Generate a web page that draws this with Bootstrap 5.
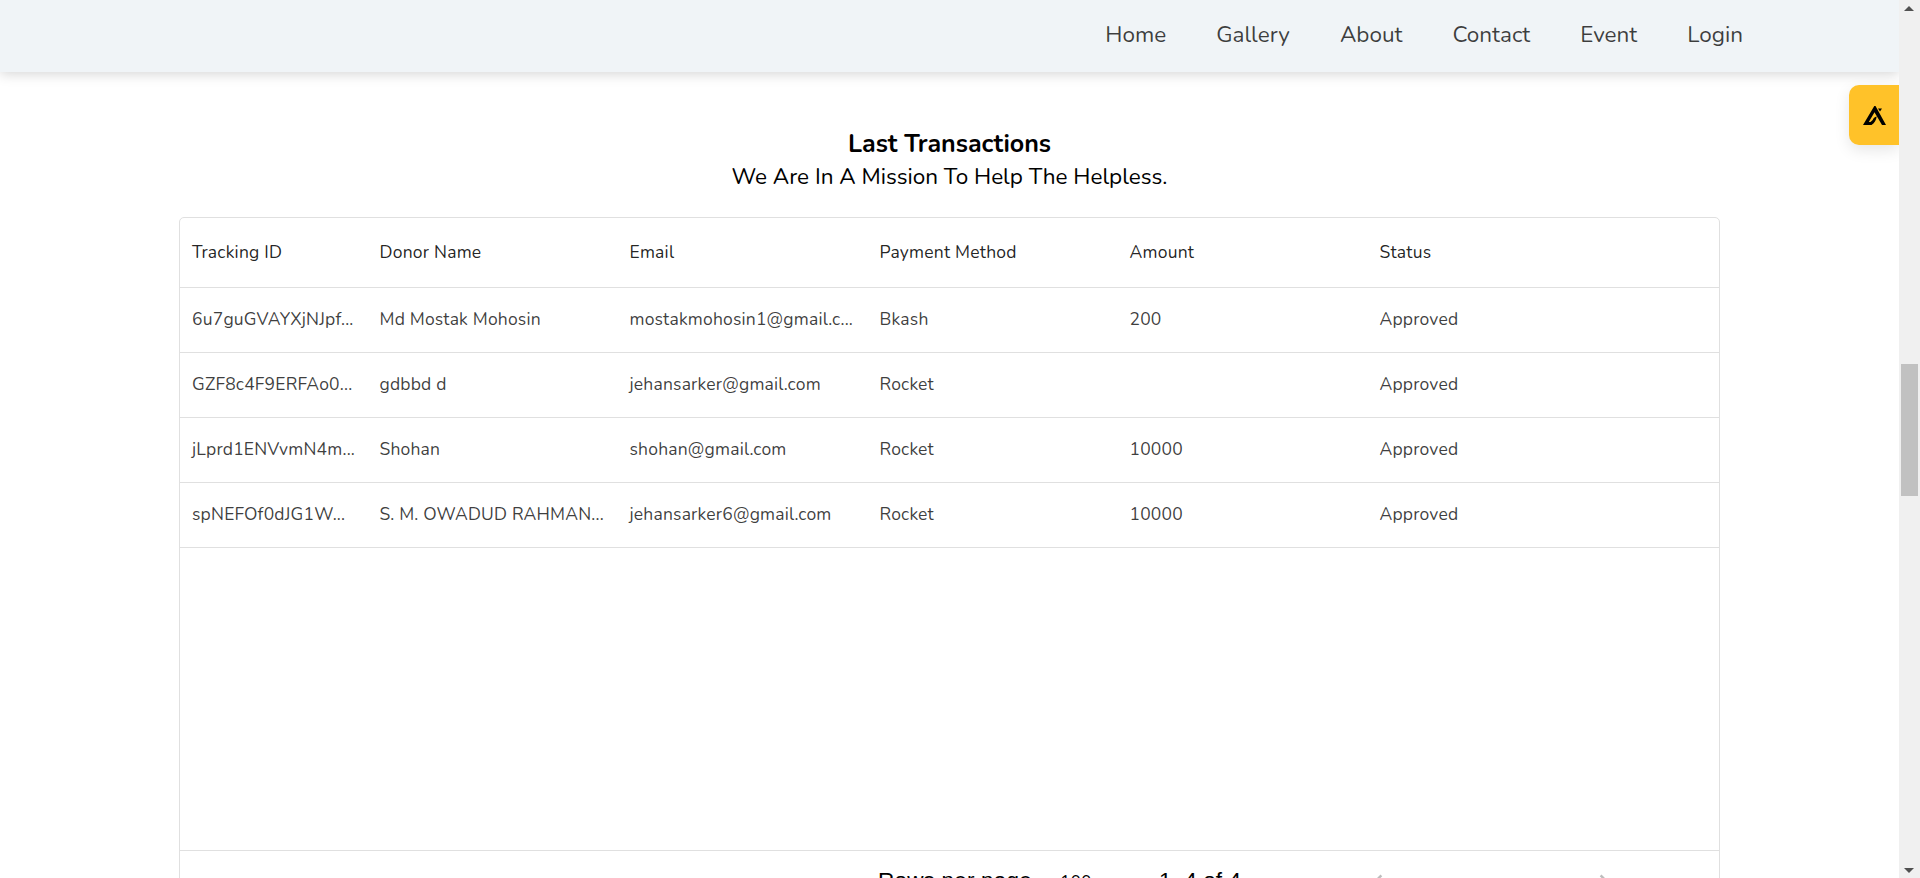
<!DOCTYPE html>
<html lang="en">
<head>
<meta charset="utf-8">
<meta name="viewport" content="width=device-width, initial-scale=1">
<title>Last Transactions</title>
<link href="https://cdn.jsdelivr.net/npm/bootstrap@5.3.0/dist/css/bootstrap.min.css" rel="stylesheet">
<style>
  body { font-family: Nunito, Lato, "Liberation Sans", sans-serif; color: #000; background: #fff; }
  .screen { height: 878px; }
  .page-view { width: 1899px; }
  .top-nav { height: 72px; background: #f0f4f7; box-shadow: 0 2px 12px rgba(0,0,0,.17); padding: 0 156px 2px 0; }
  .top-nav .nav-link { font-size: 22.5px; line-height: 34px; color: rgba(0,0,0,.75); padding: 0; margin-left: 50px; }
  .heading { font-size: 25px; font-weight: 700; line-height: 33px; margin: 56px 0 0; }
  .subheading { font-size: 22.5px; line-height: 32px; margin: 0 0 24px; }
  .data-grid { width: 1541px; height: 740px; border: 1px solid #e0e0e0; border-radius: 5px; font-size: 17.5px; letter-spacing: .1875px; }
  .grid-head, .grid-line { border-bottom: 1px solid #e0e0e0; }
  .grid-head { height: 70px; letter-spacing: .22px; color: rgba(0,0,0,.87); }
  .grid-line { height: 65px; color: rgba(0,0,0,.77); padding-bottom: 1px; }
  .cell { width: 250px; padding: 0 13px 0 12px; white-space: nowrap; overflow: hidden; flex: none; }
  .cell:first-child { width: 187.5px; }
  .grid-body { height: 563px; border-bottom: 1px solid #e0e0e0; }
  .grid-foot { height: 61px; line-height: 34px; padding: 0 100px 0 698px; }
  .foot-text { font-family: "Liberation Sans", sans-serif; font-size: 22.5px; letter-spacing: .2px; padding-bottom: 1px; }
  .foot-label { width: 154px; white-space: nowrap; }
  .pager { width: 30px; margin-left: 28px; letter-spacing: 0; }
  .range { margin-left: 69px; letter-spacing: .1px; }
  .pager-next { margin-left: 196px; }
  .side-tab { width: 50px; height: 60px; top: 85px; right: 0; background: #ffc229; border-radius: 10px 0 0 10px; box-shadow: 0 5px 15px rgba(0,0,0,.1); padding: 1px 0 0 14px; }
  .scroll-rail { width: 21px; background: #f0f0f0; padding: 6px 0 5px; }
  .scroll-thumb { width: 17px; height: 132px; background: #c1c1c1; margin-top: 353px; margin-left: 2px; }
</style>
</head>
<body>
<div class="screen d-flex overflow-hidden">
  <div class="page-view position-relative overflow-hidden flex-shrink-0">
    <nav class="top-nav d-flex align-items-center justify-content-end">
      <a class="nav-link" href="#">Home</a>
      <a class="nav-link" href="#">Gallery</a>
      <a class="nav-link" href="#">About</a>
      <a class="nav-link" href="#">Contact</a>
      <a class="nav-link" href="#">Event</a>
      <a class="nav-link" href="#">Login</a>
    </nav>

    <main class="d-flex flex-column align-items-center">
      <h1 class="heading">Last Transactions</h1>
      <p class="subheading">We Are In A Mission To Help The Helpless.</p>

      <section class="data-grid flex-shrink-0">
        <div class="grid-head d-flex align-items-center">
          <div class="cell">Tracking ID</div><div class="cell">Donor Name</div><div class="cell">Email</div><div class="cell">Payment Method</div><div class="cell">Amount</div><div class="cell">Status</div>
        </div>
        <div class="grid-body">
          <div class="grid-line d-flex align-items-center">
            <div class="cell">6u7guGVAYXjNJpf...</div><div class="cell">Md Mostak Mohosin</div><div class="cell">mostakmohosin1@gmail.c...</div><div class="cell">Bkash</div><div class="cell">200</div><div class="cell">Approved</div>
          </div>
          <div class="grid-line d-flex align-items-center">
            <div class="cell">GZF8c4F9ERFAo0...</div><div class="cell">gdbbd d</div><div class="cell">jehansarker@gmail.com</div><div class="cell">Rocket</div><div class="cell"></div><div class="cell">Approved</div>
          </div>
          <div class="grid-line d-flex align-items-center">
            <div class="cell">jLprd1ENVvmN4m...</div><div class="cell">Shohan</div><div class="cell">shohan@gmail.com</div><div class="cell">Rocket</div><div class="cell">10000</div><div class="cell">Approved</div>
          </div>
          <div class="grid-line d-flex align-items-center">
            <div class="cell">spNEFOf0dJG1W...</div><div class="cell">S. M. OWADUD RAHMAN...</div><div class="cell">jehansarker6@gmail.com</div><div class="cell">Rocket</div><div class="cell">10000</div><div class="cell">Approved</div>
          </div>
        </div>
        <div class="grid-foot d-flex align-items-center">
          <span class="foot-text foot-label">Rows per page</span>
          <span class="pager">100</span>
          <span class="foot-text range">1–4 of 4</span>
          <svg class="ms-auto" width="30" height="30" viewBox="0 0 24 24" fill="#bdbdbd"><path d="M15.4 7.4 14 6l-6 6 6 6 1.4-1.4L10.8 12z"/></svg>
          <svg class="pager-next" width="30" height="30" viewBox="0 0 24 24" fill="#bdbdbd"><path d="M10 6 8.6 7.4 13.2 12l-4.6 4.6L10 18l6-6z"/></svg>
        </div>
      </section>
    </main>

    <div class="side-tab position-absolute d-flex align-items-center">
      <svg width="24" height="22" viewBox="0 0 24 22"><path d="M11.3 1 0 20h8.5c2.8-1.6 4.7-4.7 5.2-8.5-2 .5-3.4 1.900-4 3.500L7.500 17H5.800L11.500 7.200 19 20h4L12.500 1zM15 3.500h4l-2 3z" fill="#000"/></svg>
    </div>
  </div>

  <div class="scroll-rail d-flex flex-column flex-shrink-0">
    <svg class="flex-shrink-0" width="21" height="5" viewBox="0 0 21 5"><path d="M5 5 10 0l5 5z" fill="#505050"/></svg>
    <div class="scroll-thumb flex-shrink-0"></div>
    <svg class="mt-auto flex-shrink-0" width="21" height="5" viewBox="0 0 21 5"><path d="M5 0l5 5 5-5z" fill="#505050"/></svg>
  </div>
</div>
<script src="https://cdn.jsdelivr.net/npm/bootstrap@5.3.0/dist/js/bootstrap.bundle.min.js"></script>
</body>
</html>
